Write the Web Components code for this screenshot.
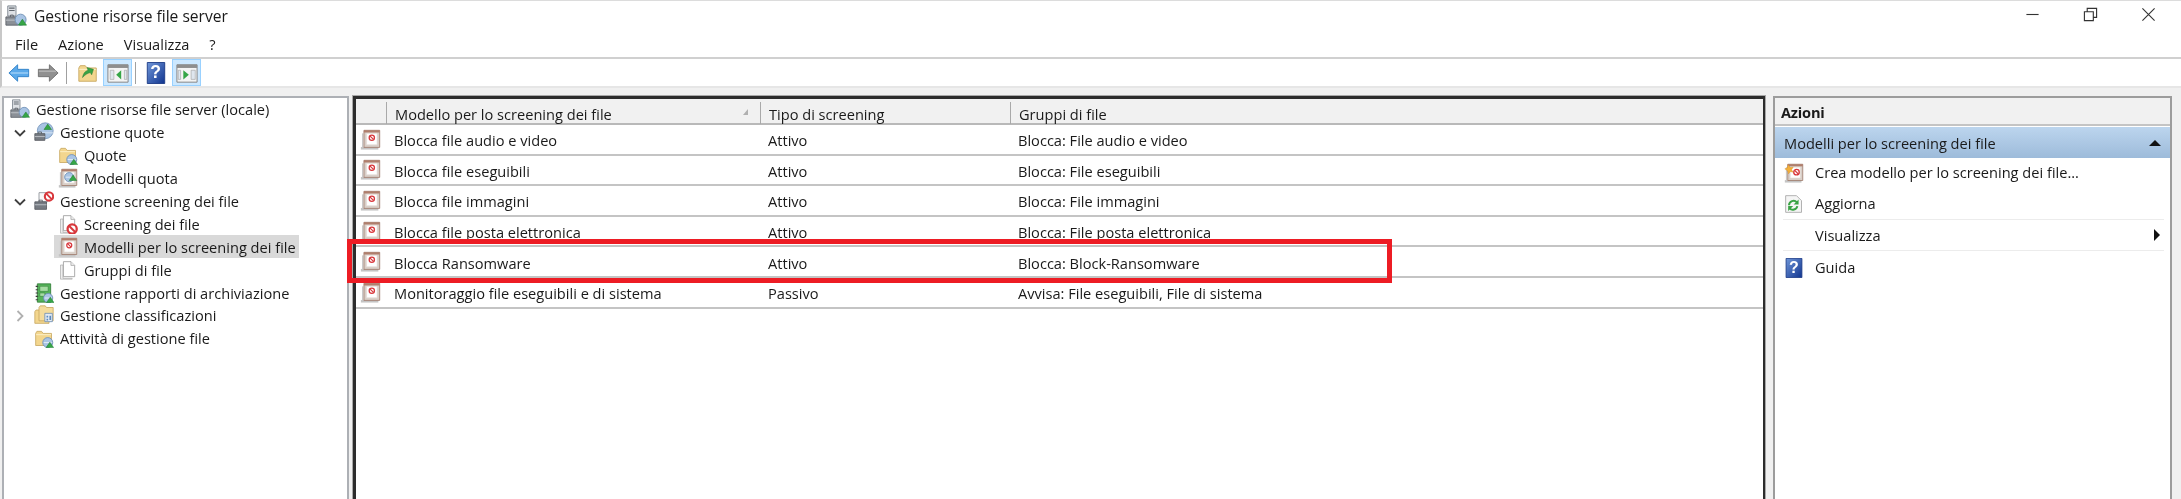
<!DOCTYPE html>
<html lang="it">
<head>
<meta charset="utf-8">
<title>Gestione risorse file server</title>
<style>
html, body { margin: 0; height: 100%; background: #f0f0f0; overflow: hidden; }
body { font: 15.6px "Open Sans", "Noto Sans", sans-serif; color: #1a1a1a; }
</style>
</head>
<body>
<mmc-window>
  <title-bar slot="title" label="Gestione risorse file server"></title-bar>
  <menu-bar slot="menu" items="File,Azione,Visualizza,?"></menu-bar>
  <tool-bar slot="tools"></tool-bar>

  <tree-pane slot="tree">
    <tree-item icon="server" level="0">Gestione risorse file server (locale)</tree-item>
    <tree-item icon="quota" level="1" arrow="open">Gestione quote</tree-item>
    <tree-item icon="folder-clock" level="2">Quote</tree-item>
    <tree-item icon="template-clock" level="2">Modelli quota</tree-item>
    <tree-item icon="screen" level="1" arrow="open">Gestione screening dei file</tree-item>
    <tree-item icon="pages-block" level="2">Screening dei file</tree-item>
    <tree-item icon="template" level="2" selected>Modelli per lo screening dei file</tree-item>
    <tree-item icon="pages" level="2">Gruppi di file</tree-item>
    <tree-item icon="book" level="1">Gestione rapporti di archiviazione</tree-item>
    <tree-item icon="class" level="1" arrow="closed">Gestione classificazioni</tree-item>
    <tree-item icon="folder-clock" level="1">Attività di gestione file</tree-item>
  </tree-pane>

  <list-pane slot="list">
    <list-row name="Blocca file audio e video" type="Attivo" group="Blocca: File audio e video"></list-row>
    <list-row name="Blocca file eseguibili" type="Attivo" group="Blocca: File eseguibili"></list-row>
    <list-row name="Blocca file immagini" type="Attivo" group="Blocca: File immagini"></list-row>
    <list-row name="Blocca file posta elettronica" type="Attivo" group="Blocca: File posta elettronica"></list-row>
    <list-row name="Blocca Ransomware" type="Attivo" group="Blocca: Block-Ransomware"></list-row>
    <list-row name="Monitoraggio file eseguibili e di sistema" type="Passivo" group="Avvisa: File eseguibili, File di sistema"></list-row>
  </list-pane>

  <actions-pane slot="actions">
    <action-item icon="new-template">Crea modello per lo screening dei file...</action-item>
    <action-item icon="refresh" line>Aggiorna</action-item>
    <action-item submenu line>Visualizza</action-item>
    <action-item icon="help">Guida</action-item>
  </actions-pane>
</mmc-window>

<script>
// Icons, all on a 24 unit grid
const block = (cx, cy, r) => `<circle cx="${cx}" cy="${cy}" r="${r}" fill="#fff" stroke="#d8383c" stroke-width="${r * 0.5}"/><path d="M${cx - r * 0.65} ${cy - r * 0.65}L${cx + r * 0.65} ${cy + r * 0.65}" stroke="#d8383c" stroke-width="${r * 0.45}"/>`;
const clock = (cx, cy, r) => `<circle cx="${cx}" cy="${cy}" r="${r}" fill="#a9c4e4" stroke="#6f8fb5" stroke-width="1"/><path d="M${cx - r * 0.8} ${cy}h${r * 1.6}" stroke="#fff" stroke-width=".8"/>`;
const peak = (x, y) => `<path d="M${x} ${y}l4.5-6.5 4.5 6.5z" fill="#36a647" stroke="#1d7a2e" stroke-width=".6"/>`;
const folder = `<path d="M2 6.5V21h19V6.5H11L9 4H3.5z" fill="#f3d68e" stroke="#c9a862"/><path d="M2.5 8h18" stroke="#fdf3d0"/>`;
const sheets = `<path d="M3 6h3v16h11v1H3z" fill="#eee" stroke="#a8a8a8" stroke-width=".8"/><path d="M6.500 2h9l4.500 4.500V20H6.500z" fill="#fff" stroke="#9a9a9a"/><path d="M15.500 2v4.500H20" fill="#eee" stroke="#9a9a9a" stroke-width=".8"/>`;
const templateShape = `<path d="M1 20.500h20v3H1z" fill="#c4c4c4"/><path d="M3 5v16" stroke="#c9c9c9" stroke-width="1.500"/><path d="M4.500 1.500h18v19.500h-18z" fill="#d9cfc8" stroke="#a07d6e"/><path d="M4.500 1.500h18v2.500h-18z" fill="#b07e6c"/><path d="M7.500 5h12v13h-12z" fill="#fff" stroke="#e4ddd8" stroke-width=".7"/>`;
const serverShape = `<path d="M3 1h9v11H3z" fill="#dfe2e6" stroke="#7d858f"/><path d="M4.500 3.500h6M4.500 6h6" stroke="#60666e" stroke-width="1.300"/><path d="M1 13h13v9H1z" fill="#8b9097" stroke="#5e636a"/><path d="M1 16.500h13" stroke="#c7cbd0"/><path d="M6 13v-2h3v2" fill="none" stroke="#5e636a"/>`;

const ICONS = {
  server: `${serverShape}<circle cx="17" cy="16" r="6" fill="#a9c4e4" stroke="#6f8fb5"/>${peak(14.500, 22)}`,
  quota: `<circle cx="13.500" cy="10.500" r="9.500" fill="#a9c4e4" stroke="#7594ba"/><path d="M4 13h19" stroke="#dce8f5"/><path d="M1 14h12v8H1z" fill="#767b82" stroke="#55595f"/><path d="M1 17.500h12" stroke="#c7cbd0"/><path d="M5 14v-2h4v2" fill="none" stroke="#55595f"/>${peak(12, 9)}`,
  "folder-clock": `${folder}${clock(16.500, 17.500, 6)}${peak(14.500, 23.500)}`,
  "template-clock": `${templateShape}${clock(13.500, 11, 5.500)}${peak(13.500, 15)}`,
  screen: `<path d="M6 2h10v11H6z" fill="#f7f7f7" stroke="#8a8f96"/><path d="M1 13h14v9H1z" fill="#767b82" stroke="#55595f"/><path d="M1 16.500h14" stroke="#c7cbd0"/><path d="M6 13v-2h4v2" fill="none" stroke="#55595f"/>${block(18, 6.500, 5)}`,
  "pages-block": `${sheets}${block(17, 18, 5.500)}`,
  template: `${templateShape}${block(13.500, 10, 3)}`,
  pages: sheets,
  book: `<path d="M4 1h16v22H4z" fill="#55b35a" stroke="#2c7a33"/><path d="M7 4h10v6H7zM7 12h6v4H7z" fill="#a6dca3" stroke="#2c7a33" stroke-width=".6"/><path d="M2 4h3M2 8h3M2 12h3M2 16h3M2 20h3" stroke="#3f3f3f" stroke-width="1.300"/>${clock(17, 18, 5.500)}${peak(15, 23.500)}`,
  class: `<path d="M1 8V22h17V8H9L7.500 6H2.500z" fill="#f3d68e" stroke="#c9a862"/><path d="M6 3v16h17V3h-8L13.500 1H7.500z" fill="#f5dc9c" stroke="#c9a862"/><path d="M13 10h9v10h-9z" fill="#e5ecf4" stroke="#6f8fb5"/><path d="M15 13h2v2h-2zM18.500 13h2v5h-2zM15 16.500h2v2h-2z" fill="#5c8ac0"/>`,
  "new-template": `${templateShape}${block(15, 11, 3.300)}<path d="M1 7l3-1 1-4 2.500 3.500L11 5 9 8l2 3-3.500-.8L5.500 13 4.500 9.500z" fill="#f4b13b" stroke="#d98d1c" stroke-width=".5"/>`,
  refresh: `<path d="M2 22V2h13l6 6v14z" fill="#f5f5f5" stroke="#a4a4a4"/><path d="M6 13.500a5.500 5.500 0 0 1 9.500-3.500M16 14.500a5.500 5.500 0 0 1-9.500 2.500" fill="none" stroke="#3aa344" stroke-width="2.400"/><path d="M17.500 6.500v6h-6zM5 20.500v-6h6z" fill="#3aa344"/>`,
  help: `<defs><linearGradient id="hg" x1="0" y1="0" x2="1" y2="1"><stop offset="0" stop-color="#6f96d8"/><stop offset="1" stop-color="#10348f"/></linearGradient></defs><path d="M2.500 .5h19v23h-19z" fill="url(#hg)" stroke="#1b3a85"/>`,
  back: `<path d="M1 12l9.500-9v5h12v8h-12v5z" fill="#5aa9ea" stroke="#2f80c7"/><path d="M3 12h19" stroke="#a6d4f7" stroke-width="1.400"/>`,
  forward: `<path d="M23 12l-9.500-9v5h-12v8h12v5z" fill="#909090" stroke="#6f6f6f"/><path d="M2 10h19" stroke="#b8b8b8" stroke-width="1.400"/>`,
  up: `${folder}<path d="M6 17c1-5 3-7 6-8l-1-3 7 2-2 6-1.500-2.500c-3 .8-6 2.500-8.500 5.500z" fill="#3aa344" stroke="#237a2f" stroke-width=".5"/>`,
  "pane-left": `<path d="M1 3h22v19H1z" fill="#f4f4f4" stroke="#7f7f7f"/><path d="M1 3h22v3.500H1z" fill="#8e8e8e"/><path d="M3.500 9h4v10h-4zM19 9h2.500v10H19z" fill="#dfe6ee" stroke="#9a9a9a" stroke-width=".6"/><path d="M10 14l5.500-5v10z" fill="#36a647"/>`,
  "pane-right": `<path d="M1 3h22v19H1z" fill="#f4f4f4" stroke="#7f7f7f"/><path d="M1 3h22v3.500H1z" fill="#8e8e8e"/><path d="M16.500 9h4.500v10h-4.500zM2.500 9H5v10H2.500z" fill="#dfe6ee" stroke="#9a9a9a" stroke-width=".6"/><path d="M14 14L8 9v10z" fill="#36a647"/>`,
};

class MmcIcon extends HTMLElement {
  connectedCallback() {
    const size = this.getAttribute("size") || 20;
    const name = this.getAttribute("name");
    const glyph = name === "help" ? `<span>?</span>` : "";
    this.attachShadow({ mode: "open" }).innerHTML = `
<style>
:host { display: inline-block; position: relative; flex: none; width: ${size}px; height: ${size}px; }
svg { display: block; width: 100%; height: 100%; }
span { position: absolute; inset: 0; display: flex; align-items: center; justify-content: center;
  color: #fff; font: bold ${size * 0.8}px "Liberation Sans", sans-serif; }
</style>
<svg viewBox="0 0 24 24" aria-hidden="true">${ICONS[name] || ""}</svg>${glyph}`;
  }
}
customElements.define("mmc-icon", MmcIcon);

class MmcWindow extends HTMLElement {
  constructor() {
    super();
    this.attachShadow({ mode: "open" }).innerHTML = `
<style>
:host { display: flex; flex-direction: column; height: 499px; position: relative; background: #f0f0f0;
  overflow: hidden; filter: blur(.3px); }
.panes { flex: 1; display: flex; padding: 8px 9px 0 2px; gap: 4px; min-height: 0; }
.tree { flex: none; width: 347px; display: flex; }
.list { flex: none; width: 1412px; display: flex; }
.actions { flex: 1; display: flex; margin-left: 4px; }
.panes ::slotted(*) { flex: 1; }
.mark { position: absolute; left: 347px; top: 239px; width: 1045px; height: 44px; box-sizing: border-box;
  border: 5px solid #ed1c24; pointer-events: none; }
</style>
<slot name="title"></slot>
<slot name="menu"></slot>
<slot name="tools"></slot>
<div class="panes">
  <div class="tree"><slot name="tree"></slot></div>
  <div class="list"><slot name="list"></slot></div>
  <div class="actions"><slot name="actions"></slot></div>
</div>
<div class="mark"></div>`;
  }
}
customElements.define("mmc-window", MmcWindow);

class TitleBar extends HTMLElement {
  connectedCallback() {
    this.attachShadow({ mode: "open" }).innerHTML = `
<style>
:host { display: flex; align-items: center; height: 30px; box-sizing: border-box; background: #fff;
  border-top: 1px solid #dcdcdc; border-left: 2px solid #c8c8c8; padding: 0 4px 0 3px; gap: 7px; font-size: 15.6px; }
.label { flex: 1; }
.ctl { width: 58px; height: 28px; display: flex; align-items: center; justify-content: center; }
.ctl svg { width: 15px; height: 15px; fill: none; stroke: #333; stroke-width: 1.200; }
.ctls { display: flex; margin-top: -2px; }
</style>
<mmc-icon name="server" size="22"></mmc-icon>
<span class="label">${this.getAttribute("label")}</span>
<div class="ctls">
  <div class="ctl"><svg viewBox="0 0 16 16"><path d="M1.500 8h13"/></svg></div>
  <div class="ctl"><svg viewBox="0 0 16 16"><path d="M1.500 5h9.500v9.500H1.500zM4.500 5V1.500h10V11H11"/></svg></div>
  <div class="ctl"><svg viewBox="0 0 16 16"><path d="M1.500 1.500l13 13M14.500 1.500l-13 13"/></svg></div>
</div>`;
  }
}
customElements.define("title-bar", TitleBar);

class MenuBar extends HTMLElement {
  connectedCallback() {
    const items = this.getAttribute("items").split(",");
    this.attachShadow({ mode: "open" }).innerHTML = `
<style>
:host { display: flex; height: 29px; box-sizing: border-box; align-items: center; background: #fff;
  border-left: 2px solid #c8c8c8; border-bottom: 2px solid #d0d0d0; padding-left: 13px; gap: 20px; font-size: 14.6px; }
</style>
${items.map((item) => `<span>${item}</span>`).join("")}`;
  }
}
customElements.define("menu-bar", MenuBar);

class ToolBar extends HTMLElement {
  connectedCallback() {
    const button = (name, size, on) =>
      `<span class="btn${on ? " on" : ""}"><mmc-icon name="${name}" size="${size}"></mmc-icon></span>`;
    this.attachShadow({ mode: "open" }).innerHTML = `
<style>
:host { display: flex; height: 29px; box-sizing: border-box; align-items: center; background: #fff;
  border-left: 2px solid #c8c8c8; border-bottom: 2px solid #e6e6e6; padding-left: 2px; }
.btn { display: flex; align-items: center; justify-content: center; width: 29px; height: 27px; box-sizing: border-box; }
.on { background: #cce8ff; border: 1px solid #99d1ff; }
.sep { width: 1px; height: 22px; background: #a0a0a0; margin: 0 6px 0 4px; }
.sep.tight { margin: 0 5px 0 3px; }
.gap { width: 1px; }
.gap2 { width: 2px; }
</style>
${button("back", 22)}${button("forward", 22)}
<span class="sep"></span>
${button("up", 22)}<span class="gap"></span>${button("pane-left", 22, true)}
<span class="sep tight"></span>
${button("help", 22)}<span class="gap2"></span>${button("pane-right", 22, true)}`;
  }
}
customElements.define("tool-bar", ToolBar);

class TreePane extends HTMLElement {
  constructor() {
    super();
    this.attachShadow({ mode: "open" }).innerHTML = `
<style>
:host { display: block; background: #fff; box-sizing: border-box; border: 2px solid #adb0b5; border-bottom: 0; }
</style>
<slot></slot>`;
  }
}
customElements.define("tree-pane", TreePane);

class TreeItem extends HTMLElement {
  connectedCallback() {
    const level = Number(this.getAttribute("level"));
    const arrow = this.getAttribute("arrow");
    const chevron = arrow === "open"
      ? `<svg viewBox="0 0 12 12"><path d="M1 3.500l5 5 5-5" fill="none" stroke="#404040" stroke-width="1.800"/></svg>`
      : arrow === "closed"
        ? `<svg viewBox="0 0 12 12"><path d="M3.500 1l5 5-5 5" fill="none" stroke="#b0b0b0" stroke-width="1.800"/></svg>`
        : "";
    this.attachShadow({ mode: "open" }).innerHTML = `
<style>
:host { display: flex; align-items: center; height: 22.9px; padding-left: ${6 + level * 24}px; font-size: 14.6px; white-space: nowrap; position: relative; }
.arrow { position: absolute; left: 10px; top: 6px; width: 12px; height: 12px; }
.arrow svg { display: block; }
.label { margin-left: 6px; line-height: 22px; padding-right: 3px; }
:host([selected]) .sel { background: #d9d9d9; }
.sel { display: flex; align-items: center; height: 22.9px; padding-left: 4px; margin-left: -4px; }
</style>
${chevron ? `<span class="arrow">${chevron}</span>` : ""}
<span class="sel"><mmc-icon name="${this.getAttribute("icon")}" size="20"></mmc-icon><span class="label"><slot></slot></span></span>`;
  }
}
customElements.define("tree-item", TreeItem);

const LIST_COLUMNS = "31px 374px 250px 1fr";

class ListPane extends HTMLElement {
  constructor() {
    super();
    this.attachShadow({ mode: "open" }).innerHTML = `
<style>
:host { display: block; background: #fff; box-sizing: border-box; border: solid #2c2c2c; border-width: 3px 2px 0 3px;
  outline: 1px solid #a8a8a8; }
.head { display: grid; grid-template-columns: ${LIST_COLUMNS}; height: 26px; box-sizing: border-box;
  background: #f1f1f1; border-bottom: 2px solid #b9b9b9; font-size: 14.6px; }
.head div { position: relative; display: flex; align-items: center; padding: 2px 0 0 8px; border-right: 1px solid #a9a9a9; margin: 3px 0 2px; }
.head div:last-child { border-right: 0; }
.sort { position: absolute; right: 10px; top: 6px; width: 8px; height: 8px; }
</style>
<div class="head">
  <div></div>
  <div>Modello per lo screening dei file
    <svg class="sort" viewBox="0 0 8 8"><path d="M6 1v6H1z" fill="#b0b0b0"/></svg></div>
  <div>Tipo di screening</div>
  <div>Gruppi di file</div>
</div>
<slot></slot>`;
  }
}
customElements.define("list-pane", ListPane);

class ListRow extends HTMLElement {
  connectedCallback() {
    this.attachShadow({ mode: "open" }).innerHTML = `
<style>
:host { display: grid; grid-template-columns: ${LIST_COLUMNS}; height: 30.6px; box-sizing: border-box;
  border-bottom: 2px solid #c4c4c4; align-items: center; font-size: 14.6px; }
.ico { padding-left: 4px; height: 21px; }
span { padding: 2px 0 0 7px; white-space: nowrap; }
</style>
<div class="ico"><mmc-icon name="template" size="21"></mmc-icon></div>
<span>${this.getAttribute("name")}</span>
<span>${this.getAttribute("type")}</span>
<span>${this.getAttribute("group")}</span>`;
  }
}
customElements.define("list-row", ListRow);

class ActionsPane extends HTMLElement {
  constructor() {
    super();
    this.attachShadow({ mode: "open" }).innerHTML = `
<style>
:host { display: block; background: #fff; box-sizing: border-box; border: solid #9c9c9c; border-width: 2px 2px 0 2px; }
.head { height: 28px; box-sizing: border-box; background: #f1f1f1; border-bottom: 2px solid #c4c4c4; padding: 2px 0 0 6px;
  display: flex; align-items: center; font-size: 14.6px; font-weight: 700; letter-spacing: -.2px; }
.section { height: 31px; margin: 1px 0 -1.5px; display: flex; align-items: center; justify-content: space-between;
  padding: 0 9px 0 9px; font-size: 14.6px; background: linear-gradient(#bcd5ee, #9dbbda); position: relative; }
.tri { width: 0; height: 0; border: 6px solid transparent; border-top: 0; border-bottom: 6px solid #111; }
</style>
<div class="head">Azioni</div>
<div class="section"><span>Modelli per lo screening dei file</span><i class="tri"></i></div>
<slot></slot>`;
  }
}
customElements.define("actions-pane", ActionsPane);

class ActionItem extends HTMLElement {
  connectedCallback() {
    const icon = this.getAttribute("icon");
    this.attachShadow({ mode: "open" }).innerHTML = `
<style>
:host { display: flex; align-items: center; height: 31.500px; margin: 0 6px 0 8px; padding-left: 1px; box-sizing: border-box;
  font-size: 14.6px; }
:host([line]) { border-bottom: 1px solid #ececec; }
.slot { width: 31px; flex: none; display: flex; margin-top: 2px; }
.label { flex: 1; }
.tri { width: 0; height: 0; border: 6px solid transparent; border-right: 0; border-left: 6px solid #111; margin-right: 4px; }
</style>
<span class="slot">${icon ? `<mmc-icon name="${icon}" size="20"></mmc-icon>` : ""}</span>
<span class="label"><slot></slot></span>
${this.hasAttribute("submenu") ? `<i class="tri"></i>` : ""}`;
  }
}
customElements.define("action-item", ActionItem);
</script>
</body>
</html>
